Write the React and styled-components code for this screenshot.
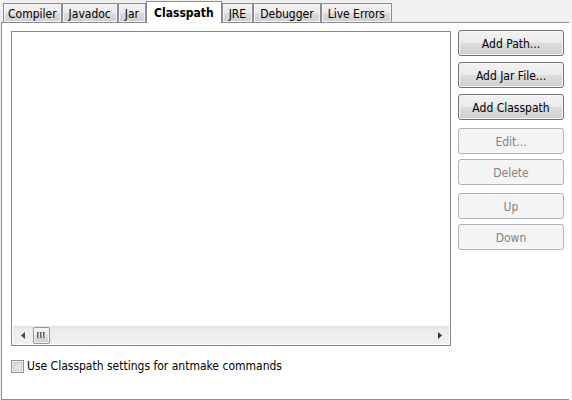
import React, { useState } from "react";
import styled, { createGlobalStyle } from "styled-components";

const line = "#898c95";

const GlobalStyle = createGlobalStyle`
  *, *::before, *::after { box-sizing: border-box; }
  body {
    margin: 0;
    background: #f0f0f0;
    color: #000;
    font: 12px/16px "DejaVu Sans Condensed", "DejaVu Sans", sans-serif;
    font-stretch: condensed;
  }
  button, input { font: inherit; }
`;

const Page = styled.main`
  display: flex;
  flex-direction: column;
  min-height: 100vh;
  padding: 1px 1px 0;
`;

const TabBar = styled.div`
  display: flex;
  align-items: flex-end;
  height: 22px;
  padding-left: 2px;
  margin-bottom: -1px;
  z-index: 1;
`;

const Tab = styled.button`
  flex: none;
  height: ${(p) => (p.$active ? 22 : 19)}px;
  margin: 0;
  margin-bottom: ${(p) => (p.$active ? 0 : 1)}px;
  padding: ${(p) => (p.$active ? "1px 7px 0" : "1px 6px 0")};
  border: 1px solid ${line};
  border-bottom: 0;
  color: #000;
  font-weight: ${(p) => (p.$active ? "bold" : "normal")};
  white-space: nowrap;
  background: ${(p) =>
    p.$active ? "#fff" : "linear-gradient(#f2f2f2, #ebebeb 50%, #dddddd 50%, #cfcfcf)"};
  box-shadow: ${(p) => (p.$active ? "none" : "inset 0 0 0 1px #f4f4f4")};

  &:first-child {
    padding-left: 4px;
    padding-right: 4px;
  }
`;

const Panel = styled.section`
  flex: 1;
  display: flex;
  flex-direction: column;
  padding: 9px 7px 26px 9px;
  border-left: 1px solid ${line};
  background:
    linear-gradient(${line}, ${line}) 0 0 / calc(100% - 2px) 1px no-repeat,
    linear-gradient(${line}, ${line}) 0 100% / calc(100% - 2px) 1px no-repeat,
    #fff;
`;

const Content = styled.div`
  flex: 1;
  display: flex;
  gap: 7px;
`;

const ListBox = styled.div`
  flex: 1;
  min-width: 0;
  display: flex;
  flex-direction: column;
  padding: 1px;
  border: 1px solid #828790;
`;

const Entries = styled.div`
  flex: 1;
`;

const ScrollBar = styled.div`
  display: flex;
  align-items: center;
  height: 18px;
  padding: 0 3px;
  background: linear-gradient(#e3e3e3, #ececec 4px, #eeeeee 14px, #f1f1f1);
`;

const Arrow = styled.button`
  display: flex;
  align-items: center;
  justify-content: center;
  width: 13px;
  height: 17px;
  padding: 0;
  border: 0;
  background: none;
`;

const Track = styled.div`
  flex: 1;
  padding-left: 4px;
`;

const Thumb = styled.div`
  display: flex;
  align-items: center;
  justify-content: center;
  width: 17px;
  height: 17px;
  border: 1px solid #979797;
  border-radius: 2px;
  background: linear-gradient(#f5f5f5, #ebebed 50%, #dddee0 50%, #cfd0d2);
  box-shadow: inset 0 0 0 1px #f4f4f4;
`;

const Actions = styled.div`
  flex: none;
  display: flex;
  flex-direction: column;
  gap: 8px;
  width: 106px;
  margin-top: -1px;
`;

const ActionGroup = styled.div`
  display: flex;
  flex-direction: column;
  gap: ${(p) => (p.$tight ? 5 : 6)}px;
`;

const ActionButton = styled.button`
  height: 26px;
  padding: 1px 4px 0;
  border: 1px solid #707070;
  border-radius: 3px;
  color: #000;
  background: linear-gradient(#f2f2f2, #ebebeb 50%, #dddddd 50%, #cfcfcf);
  box-shadow: inset 0 0 0 1px #f6f6f6;

  &:disabled {
    border-color: #adb2b5;
    color: #838383;
    background: #f4f4f4;
  }
`;

const Option = styled.label`
  display: flex;
  align-items: center;
  gap: 3px;
  margin-top: 12px;
`;

const CheckBox = styled.input`
  appearance: none;
  width: 13px;
  height: 13px;
  margin: 0;
  border: 1px solid #8e8f8f;
  background: linear-gradient(135deg, #cbcfd5, #f6f6f6);
  box-shadow: inset 0 0 0 1px #f4f4f4, inset 0 0 0 2px #c9cdd3;

  &:checked {
    background: #4b5f83;
  }
`;

const tabs = ["Compiler", "Javadoc", "Jar", "Classpath", "JRE", "Debugger", "Live Errors"];

export default function App() {
  const [active, setActive] = useState("Classpath");
  const [antmake, setAntmake] = useState(false);

  return (
    <>
      <GlobalStyle />
      <Page>
        <TabBar role="tablist">
          {tabs.map((name) => (
            <Tab
              key={name}
              role="tab"
              aria-selected={name === active}
              $active={name === active}
              onClick={() => setActive(name)}
            >
              {name}
            </Tab>
          ))}
        </TabBar>
        <Panel role="tabpanel" aria-label={active}>
          <Content>
            <ListBox>
              <Entries role="listbox" aria-label="Classpath entries" />
              <ScrollBar>
                <Arrow aria-label="Scroll left">
                  <svg width="4" height="7" viewBox="0 0 4 7">
                    <path d="M4 0v7L0 3.5z" fill="#444" />
                  </svg>
                </Arrow>
                <Track>
                  <Thumb>
                    <svg width="9" height="7" viewBox="0 0 9 7" shapeRendering="crispEdges">
                      <path d="M0 0h2v1H0zM3 0h2v1H3zM6 0h2v1H6zM0 0h1v6H0zM3 0h1v6H3zM6 0h1v6H6z" fill="#666" />
                      <path d="M1 1h1v6H1zM4 1h1v6H4zM7 1h1v6H7z" fill="#aaa" />
                    </svg>
                  </Thumb>
                </Track>
                <Arrow aria-label="Scroll right">
                  <svg width="4" height="7" viewBox="0 0 4 7">
                    <path d="M0 0v7l4-3.5z" fill="#333" />
                  </svg>
                </Arrow>
              </ScrollBar>
            </ListBox>
            <Actions>
              <ActionGroup>
                <ActionButton>Add Path...</ActionButton>
                <ActionButton>Add Jar File...</ActionButton>
                <ActionButton>Add Classpath</ActionButton>
              </ActionGroup>
              <ActionGroup $tight>
                <ActionButton disabled>Edit...</ActionButton>
                <ActionButton disabled>Delete</ActionButton>
              </ActionGroup>
              <ActionGroup $tight>
                <ActionButton disabled>Up</ActionButton>
                <ActionButton disabled>Down</ActionButton>
              </ActionGroup>
            </Actions>
          </Content>
          <Option>
            <CheckBox
              type="checkbox"
              checked={antmake}
              onChange={(e) => setAntmake(e.target.checked)}
            />
            Use Classpath settings for antmake commands
          </Option>
        </Panel>
      </Page>
    </>
  );
}
